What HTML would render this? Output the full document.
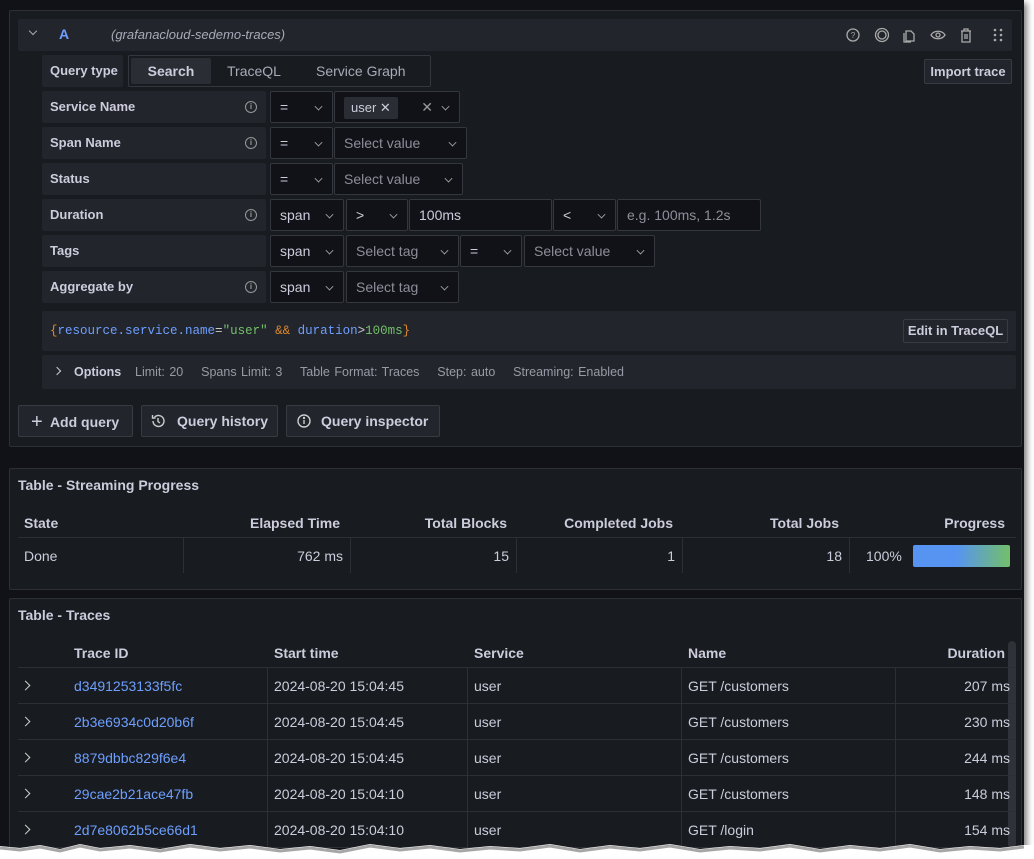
<!DOCTYPE html>
<html style="overflow:hidden;width:1034px;height:859px"><head><meta charset="utf-8"><style>
*{box-sizing:border-box;margin:0;padding:0}
body{width:1034px;height:859px;background:#fff;position:relative;overflow:hidden;font-family:"Liberation Sans",sans-serif;color:#ccccdc;font-size:14px}
.a{position:absolute}
.outer{left:0;top:0;width:1024px;height:850px;background:#111217;box-shadow:3px 3px 6px rgba(0,0,0,.5)}
.panel{background:#181b1f;border:1px solid #2c2f35;border-radius:2px}
.lbl{background:#22252b;height:32px;font-size:13px;font-weight:bold;line-height:32px;padding-left:8px;color:#ccccdc;border-radius:2px}
.inp{background:#111217;border:1px solid #34373d;height:32px;border-radius:2px;line-height:30px;padding-left:9px;font-size:14px;color:#ccccdc}
.ph{color:#8e8e9a}
.chev{position:absolute;right:10px;top:11px;width:7px;height:7px;border-right:1.3px solid #aaa;border-bottom:1.3px solid #aaa;transform:rotate(45deg) scale(.8)}
.info{position:absolute;right:9px;top:10px;width:12px;height:12px;border:1.3px solid #999;border-radius:50%;font-size:8px;line-height:9px;text-align:center;color:#999;font-weight:bold}
.btn{background:#22252b;border:1px solid #383b42;border-radius:2px;height:32px;line-height:30px;font-size:14px;font-weight:bold;color:#ccccdc}
.th{font-weight:bold;font-size:14px;color:#ccccdc}
.hl{height:1px;background:#2c2f35}
.vl{width:1px;background:#2c2f35}
.tid{color:#6e9fff}
.mono{font-family:"Liberation Mono",monospace;font-size:12.5px}
.rc{width:7px;height:7px;border-right:1.4px solid #ccc;border-bottom:1.4px solid #ccc;transform:rotate(-45deg)}
</style></head><body>
<div class="a outer"></div>
<div class="a panel" style="left:9px;top:10px;width:1013px;height:437px"></div>
<div class="a" style="left:18px;top:19px;width:994px;height:32px;background:#22252b;border-radius:2px"></div>
<div class="a" style="left:30px;top:28px;width:6px;height:6px;border-right:1.3px solid #aaa;border-bottom:1.3px solid #aaa;transform:rotate(45deg)"></div>
<div class="a" style="left:59px;top:26px;color:#6e9fff;font-weight:bold;font-size:14px">A</div>
<div class="a" style="left:111px;top:27px;font-style:italic;font-size:13px;color:#aaaab8">(grafanacloud-sedemo-traces)</div>
<svg class="a" style="left:845px;top:26px" width="165" height="18" viewBox="0 0 165 18" fill="none" stroke="#aaa" stroke-width="1.3">
<circle cx="8" cy="9" r="6"/><text x="8" y="12" font-size="8" fill="#aaa" stroke="none" text-anchor="middle" font-family="Liberation Sans">?</text>
<circle cx="37" cy="9" r="6.5"/><circle cx="37" cy="9" r="4"/>
<path d="M61 5h5l3 3v7h-8z M59 7v9h7"/>
<path d="M86 9c3-5 11-5 14 0c-3 5-11 5-14 0z"/><circle cx="93" cy="9" r="2"/>
<path d="M116 5h10M119 5v-2h4v2M117 5v11h8v-11M120 8v5M122 8v5"/>
<g fill="#aaa" stroke="none"><circle cx="150" cy="4" r="1.3"/><circle cx="156" cy="4" r="1.3"/><circle cx="150" cy="9" r="1.3"/><circle cx="156" cy="9" r="1.3"/><circle cx="150" cy="14" r="1.3"/><circle cx="156" cy="14" r="1.3"/></g>
</svg>

<div class="a lbl" style="left:42px;top:55px;width:81px">Query type</div>
<div class="a" style="left:128px;top:55px;width:303px;height:32px;border:1px solid #34373d;border-radius:2px"></div>
<div class="a" style="left:131px;top:58px;width:80px;height:26px;background:#2a2d33;border-radius:2px;text-align:center;line-height:26px;font-weight:bold">Search</div>
<div class="a" style="left:227px;top:63px;color:#aaaab8">TraceQL</div>
<div class="a" style="left:316px;top:63px;color:#aaaab8">Service Graph</div>
<div class="a btn" style="left:924px;top:59px;width:88px;height:25px;line-height:23px;font-size:13px;text-align:center">Import trace</div>

<div class="a lbl" style="left:42px;top:91px;width:224px">Service Name<span class="info">i</span></div>
<div class="a inp" style="left:270px;top:91px;width:63px">=<span class="chev"></span></div>
<div class="a inp" style="left:334px;top:91px;width:126px"><span style="position:absolute;left:9px;top:5px;height:22px;line-height:22px;background:#2a2d33;padding:0 7px;border-radius:2px;font-size:13px">user ✕</span><span style="position:absolute;right:26px;top:0;color:#999">✕</span><span class="chev"></span></div>

<div class="a lbl" style="left:42px;top:127px;width:224px">Span Name<span class="info">i</span></div>
<div class="a inp" style="left:270px;top:127px;width:63px">=<span class="chev"></span></div>
<div class="a inp ph" style="left:334px;top:127px;width:133px">Select value<span class="chev"></span></div>

<div class="a lbl" style="left:42px;top:163px;width:224px">Status</div>
<div class="a inp" style="left:270px;top:163px;width:63px">=<span class="chev"></span></div>
<div class="a inp ph" style="left:334px;top:163px;width:129px">Select value<span class="chev"></span></div>

<div class="a lbl" style="left:42px;top:199px;width:224px">Duration<span class="info">i</span></div>
<div class="a inp" style="left:270px;top:199px;width:74px">span<span class="chev"></span></div>
<div class="a inp" style="left:346px;top:199px;width:62px">&gt;<span class="chev"></span></div>
<div class="a inp" style="left:409px;top:199px;width:143px">100ms</div>
<div class="a inp" style="left:553px;top:199px;width:63px">&lt;<span class="chev"></span></div>
<div class="a inp ph" style="left:617px;top:199px;width:144px">e.g. 100ms, 1.2s</div>

<div class="a lbl" style="left:42px;top:235px;width:224px">Tags</div>
<div class="a inp" style="left:270px;top:235px;width:74px">span<span class="chev"></span></div>
<div class="a inp ph" style="left:346px;top:235px;width:113px">Select tag<span class="chev"></span></div>
<div class="a inp" style="left:460px;top:235px;width:62px">=<span class="chev"></span></div>
<div class="a inp ph" style="left:524px;top:235px;width:131px">Select value<span class="chev"></span></div>

<div class="a lbl" style="left:42px;top:271px;width:224px">Aggregate by<span class="info">i</span></div>
<div class="a inp" style="left:270px;top:271px;width:74px">span<span class="chev"></span></div>
<div class="a inp ph" style="left:346px;top:271px;width:113px">Select tag<span class="chev"></span></div>

<div class="a" style="left:42px;top:311px;width:974px;height:40px;background:#22252b;border-radius:2px"></div>
<div class="a mono" style="left:50px;top:324px"><span style="color:#e0882a">{</span><span style="color:#6e9fff">resource.service.name</span><span style="color:#ccc">=</span><span style="color:#73bf69">"user"</span> <span style="color:#e0882a">&amp;&amp;</span> <span style="color:#6e9fff">duration</span><span style="color:#ccc">&gt;</span><span style="color:#73bf69">100ms</span><span style="color:#e0882a">}</span></div>
<div class="a btn" style="left:903px;top:319px;width:105px;height:24px;line-height:22px;font-size:13px;text-align:center">Edit in TraceQL</div>

<div class="a" style="left:42px;top:355px;width:974px;height:34px;background:#22252b;border-radius:2px"></div>
<div class="a" style="left:54px;top:368px;width:6px;height:6px;border-right:1.3px solid #ccc;border-bottom:1.3px solid #ccc;transform:rotate(-45deg)"></div>
<div class="a" style="left:74px;top:365px;font-size:12.5px;font-weight:bold">Options</div>
<div class="a" style="left:135px;top:365px;font-size:12.5px;color:#9a9aa6;word-spacing:1px">Limit: 20 &nbsp;&nbsp; Spans Limit: 3 &nbsp;&nbsp; Table Format: Traces &nbsp;&nbsp; Step: auto &nbsp;&nbsp; Streaming: Enabled</div>

<div class="a btn" style="left:18px;top:405px;width:115px;padding-left:12px"><span style="font-size:20px;font-weight:normal;position:relative;top:1px">+</span>&nbsp; Add query</div>
<div class="a btn" style="left:141px;top:405px;width:137px;padding-left:35px">Query history</div>
<svg class="a" style="left:150px;top:413px" width="16" height="16" fill="none" stroke="#ccc" stroke-width="1.4"><path d="M3 8a5.5 5.5 0 1 0 1.6-3.9M2.5 2v3h3M8 5v3.5l2 1.5"/></svg>
<div class="a btn" style="left:286px;top:405px;width:154px;padding-left:34px">Query inspector</div>
<svg class="a" style="left:296px;top:413px" width="16" height="16" fill="none" stroke="#ccc" stroke-width="1.4"><circle cx="8" cy="8" r="6"/><path d="M8 7v4"/><circle cx="8" cy="5" r=".5" fill="#ccc"/></svg>

<!-- panel 2 -->
<div class="a panel" style="left:9px;top:468px;width:1013px;height:122px"></div>
<div class="a" style="left:18px;top:477px;font-weight:bold;font-size:14px">Table - Streaming Progress</div>
<div class="a th" style="left:24px;top:515px">State</div>
<div class="a th" style="left:183px;width:157px;top:515px;text-align:right">Elapsed Time</div>
<div class="a th" style="left:350px;width:157px;top:515px;text-align:right">Total Blocks</div>
<div class="a th" style="left:516px;width:157px;top:515px;text-align:right">Completed Jobs</div>
<div class="a th" style="left:682px;width:157px;top:515px;text-align:right">Total Jobs</div>
<div class="a th" style="left:849px;width:156px;top:515px;text-align:right">Progress</div>
<div class="a hl" style="left:18px;top:537px;width:998px"></div>
<div class="a vl" style="left:183px;top:538px;height:35px"></div>
<div class="a vl" style="left:350px;top:538px;height:35px"></div>
<div class="a vl" style="left:516px;top:538px;height:35px"></div>
<div class="a vl" style="left:682px;top:538px;height:35px"></div>
<div class="a vl" style="left:849px;top:538px;height:35px"></div>
<div class="a" style="left:24px;top:548px">Done</div>
<div class="a" style="left:183px;width:160px;top:548px;text-align:right">762 ms</div>
<div class="a" style="left:350px;width:159px;top:548px;text-align:right">15</div>
<div class="a" style="left:516px;width:159px;top:548px;text-align:right">1</div>
<div class="a" style="left:682px;width:160px;top:548px;text-align:right">18</div>
<div class="a" style="left:866px;top:548px">100%</div>
<div class="a" style="left:913px;top:545px;width:97px;height:22px;border-radius:2px;background:linear-gradient(90deg,#5794f2 0%,#5794f2 45%,#73bf69 100%)"></div>

<!-- panel 3 -->
<div class="a panel" style="left:9px;top:598px;width:1013px;height:250px"></div>
<div class="a" style="left:18px;top:607px;font-weight:bold;font-size:14px">Table - Traces</div>
<div class="a" style="left:1008px;top:641px;width:8px;height:207px;background:#2f3238;border-radius:4px"></div>
<div class="a th" style="left:74px;top:645px">Trace ID</div>
<div class="a th" style="left:274px;top:645px">Start time</div>
<div class="a th" style="left:474px;top:645px">Service</div>
<div class="a th" style="left:688px;top:645px">Name</div>
<div class="a th" style="left:895px;width:110px;top:645px;text-align:right">Duration</div>
<div class="a hl" style="left:18px;top:667px;width:998px"></div>
<div class="a hl" style="left:18px;top:703px;width:998px"></div>
<div class="a hl" style="left:18px;top:739px;width:998px"></div>
<div class="a hl" style="left:18px;top:775px;width:998px"></div>
<div class="a hl" style="left:18px;top:811px;width:998px"></div>
<div class="a vl" style="left:267px;top:668px;height:180px"></div>
<div class="a vl" style="left:467px;top:668px;height:180px"></div>
<div class="a vl" style="left:681px;top:668px;height:180px"></div>
<div class="a vl" style="left:895px;top:668px;height:180px"></div>

<div class="a rc" style="left:22px;top:682px"></div><div class="a tid" style="left:74px;top:678px">d3491253133f5fc</div><div class="a" style="left:274px;top:678px">2024-08-20 15:04:45</div><div class="a" style="left:474px;top:678px">user</div><div class="a" style="left:688px;top:678px">GET /customers</div><div class="a" style="left:895px;width:115px;top:678px;text-align:right">207 ms</div>
<div class="a rc" style="left:22px;top:718px"></div><div class="a tid" style="left:74px;top:714px">2b3e6934c0d20b6f</div><div class="a" style="left:274px;top:714px">2024-08-20 15:04:45</div><div class="a" style="left:474px;top:714px">user</div><div class="a" style="left:688px;top:714px">GET /customers</div><div class="a" style="left:895px;width:115px;top:714px;text-align:right">230 ms</div>
<div class="a rc" style="left:22px;top:754px"></div><div class="a tid" style="left:74px;top:750px">8879dbbc829f6e4</div><div class="a" style="left:274px;top:750px">2024-08-20 15:04:45</div><div class="a" style="left:474px;top:750px">user</div><div class="a" style="left:688px;top:750px">GET /customers</div><div class="a" style="left:895px;width:115px;top:750px;text-align:right">244 ms</div>
<div class="a rc" style="left:22px;top:790px"></div><div class="a tid" style="left:74px;top:786px">29cae2b21ace47fb</div><div class="a" style="left:274px;top:786px">2024-08-20 15:04:10</div><div class="a" style="left:474px;top:786px">user</div><div class="a" style="left:688px;top:786px">GET /customers</div><div class="a" style="left:895px;width:115px;top:786px;text-align:right">148 ms</div>
<div class="a rc" style="left:22px;top:826px"></div><div class="a tid" style="left:74px;top:822px">2d7e8062b5ce66d1</div><div class="a" style="left:274px;top:822px">2024-08-20 15:04:10</div><div class="a" style="left:474px;top:822px">user</div><div class="a" style="left:688px;top:822px">GET /login</div><div class="a" style="left:895px;width:115px;top:822px;text-align:right">154 ms</div>

<!-- torn bottom edge -->
<svg class="a" style="left:0;top:836px" width="1034" height="23" viewBox="0 0 1034 23" preserveAspectRatio="none">
<path d="M0 10 L20 12 L40 9 L60 13 L80 8 L100 12 L130 9 L160 13 L190 8 L220 12 L250 9 L280 13 L310 10 L340 14 L370 8 L400 12 L430 9 L460 13 L490 10 L520 12 L550 8 L580 13 L610 9 L640 12 L670 8 L700 13 L730 10 L760 12 L790 8 L820 13 L850 9 L880 12 L910 8 L940 13 L970 10 L1000 12 L1024 9 L1034 9 L1034 23 L0 23 Z" fill="#fff"/>
<path d="M0 10 L20 12 L40 9 L60 13 L80 8 L100 12 L130 9 L160 13 L190 8 L220 12 L250 9 L280 13 L310 10 L340 14 L370 8 L400 12 L430 9 L460 13 L490 10 L520 12 L550 8 L580 13 L610 9 L640 12 L670 8 L700 13 L730 10 L760 12 L790 8 L820 13 L850 9 L880 12 L910 8 L940 13 L970 10 L1000 12 L1024 9" fill="none" stroke="rgba(0,0,0,.35)" stroke-width="3" transform="translate(0,2)"/>
</svg>
</body></html>
